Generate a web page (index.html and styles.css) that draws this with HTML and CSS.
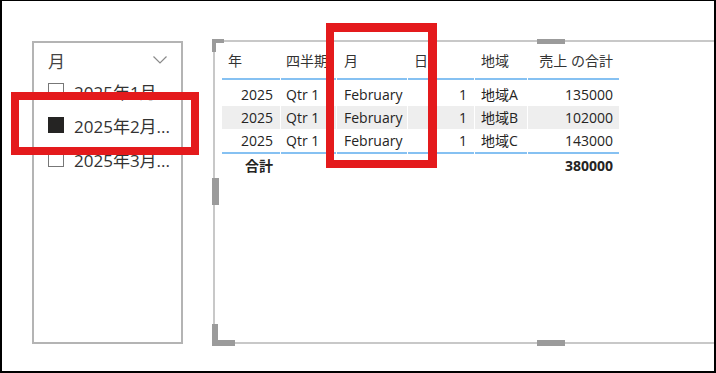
FILE: index.html
```html
<!DOCTYPE html>
<html lang="ja">
<head>
<meta charset="utf-8">
<title>Slicer and table</title>
<link rel="stylesheet" href="styles.css">
</head>
<body>
<div class="screen">
  <section class="slicer">
    <div class="slicer-head">
      <span class="slicer-title">月</span>
      <svg class="chevron" width="14" height="8" viewBox="0 0 14 8"><polyline points="0.5,0.5 7,7 13.5,0.5" fill="none" stroke="#8a8a8a" stroke-width="1.2"/></svg>
    </div>
    <ul class="items">
      <li class="item"><span class="box"></span><span class="label">2025年1月</span></li>
      <li class="item"><span class="box checked"></span><span class="label">2025年2月...</span></li>
      <li class="item"><span class="box"></span><span class="label">2025年3月...</span></li>
    </ul>
  </section>

  <section class="visual">
    <span class="handle h-tl"></span>
    <span class="handle h-tm"></span>
    <span class="handle h-lm"></span>
    <span class="handle h-bl"></span>
    <span class="handle h-bm"></span>
    <div class="tbl">
      <div class="hd">年</div>
      <div class="hd">四半期</div>
      <div class="hd">月</div>
      <div class="hd">日</div>
      <div class="hd">地域</div>
      <div class="hd r">売上 の合計</div>

      <div class="c r first">2025</div>
      <div class="c first">Qtr 1</div>
      <div class="c first">February</div>
      <div class="c r first">1</div>
      <div class="c first">地域A</div>
      <div class="c r first">135000</div>

      <div class="c r alt">2025</div>
      <div class="c alt">Qtr 1</div>
      <div class="c alt">February</div>
      <div class="c r alt">1</div>
      <div class="c alt">地域B</div>
      <div class="c r alt">102000</div>

      <div class="c r">2025</div>
      <div class="c">Qtr 1</div>
      <div class="c">February</div>
      <div class="c r">1</div>
      <div class="c">地域C</div>
      <div class="c r">143000</div>

      <div class="t r">合計</div>
      <div class="t"></div>
      <div class="t"></div>
      <div class="t"></div>
      <div class="t"></div>
      <div class="t r">380000</div>
    </div>
  </section>

  <div class="mark mark-slicer"></div>
  <div class="mark mark-col"></div>
</div>
</body>
</html>
```

FILE: styles.css
```css
html, body {
  margin: 0;
  padding: 0;
  background: #fff;
}

.screen {
  position: relative;
  width: 716px;
  height: 373px;
  box-sizing: border-box;
  border-style: solid;
  border-color: #000;
  border-width: 1px 2px 2px 2px;
  background: #fff;
  display: flex;
  align-items: flex-start;
  padding-left: 30px;
  overflow: hidden;
  font-family: "Open Sans", "Noto Sans CJK JP", sans-serif;
  color: #252423;
}

/* ---------- slicer ---------- */
.slicer {
  flex: none;
  margin-top: 40px;
  width: 151px;
  height: 303px;
  box-sizing: border-box;
  border: 2px solid #b4b4b4;
  background: #fff;
}

.slicer-head {
  display: flex;
  justify-content: space-between;
  align-items: flex-start;
  padding: 8px 14px 0 14px;
  height: 22px;
}

.slicer-title {
  font-size: 17px;
  line-height: 22px;
  color: #444;
}

.chevron {
  margin-top: 5px;
}

.items {
  list-style: none;
  margin: 1px 0 0 0;
  padding: 0 0 0 14px;
}

.item {
  height: 34px;
  display: flex;
  align-items: center;
  gap: 10px;
  font-size: 17px;
  color: #333;
}

.box {
  width: 16px;
  height: 16px;
  box-sizing: border-box;
  border: 1px solid #777;
  background: #fff;
  flex: none;
}

.box.checked {
  background: #252423;
  border-color: #252423;
}

.label {
  white-space: nowrap;
}

/* ---------- table visual ---------- */
.visual {
  position: relative;
  flex: none;
  margin-top: 39px;
  margin-left: 30px;
  width: 540px;
  height: 304px;
  box-sizing: border-box;
  border-top: 2px solid #c8c8c8;
  border-left: 2px solid #c8c8c8;
  border-bottom: 2px solid #c8c8c8;
  padding-left: 7px;
}

.handle {
  position: absolute;
  box-sizing: border-box;
  border: 0 solid #9b9b9b;
}

.h-tl {
  left: -3px;
  top: -3px;
  width: 12px;
  height: 13px;
  border-top-width: 4px;
  border-left-width: 4px;
}

.h-tm {
  left: 322px;
  top: -3px;
  width: 28px;
  height: 5px;
  background: #9b9b9b;
}

.h-lm {
  left: -3px;
  top: 136px;
  width: 7px;
  height: 27px;
  background: #9b9b9b;
}

.h-bl {
  left: -3px;
  bottom: -4px;
  width: 23px;
  height: 22px;
  border-left-width: 6px;
  border-bottom-width: 6px;
}

.h-bm {
  left: 322px;
  bottom: -4px;
  width: 28px;
  height: 6px;
  background: #9b9b9b;
}

.tbl {
  display: grid;
  grid-template-columns: 58px 55px 70px 66px 52px 91px;
  column-gap: 1px;
  font-size: 14px;
  line-height: 19px;
  white-space: nowrap;
}

.tbl > div {
  overflow: hidden;
}

.hd {
  height: 36px;
  display: flex;
  align-items: center;
  padding: 0 6px;
  border-bottom: 2px solid #86c1f2;
  color: #333;
}

.hd:nth-child(2) {
  padding-left: 5px;
}

.hd:nth-child(3) {
  padding-left: 7px;
}

.hd:nth-child(4) {
  padding-left: 6px;
}

.c {
  height: 23px;
  display: flex;
  align-items: center;
  padding: 0 7px 0 6px;
}

.c:nth-child(6n+2) {
  padding-left: 5px;
}

.c:nth-child(6n+3) {
  padding-left: 7px;
}

.c.first {
  margin-top: 3px;
}

.c.alt {
  background: #eeeeee;
}

.r {
  justify-content: flex-end;
}

.t {
  height: 22px;
  display: flex;
  align-items: center;
  padding: 0 7px 0 6px;
  border-top: 2px solid #86c1f2;
  font-weight: 700;
}

.tbl > .c:nth-child(6n),
.tbl > .t:last-child,
.tbl > .hd:nth-child(6) {
  padding-right: 6px;
}

/* ---------- annotation marks ---------- */
.mark {
  position: absolute;
  box-sizing: border-box;
  border: 8px solid #e41a1c;
}

.mark-slicer {
  left: 9px;
  top: 91px;
  width: 188px;
  height: 63px;
}

.mark-col {
  left: 324px;
  top: 22px;
  width: 111px;
  height: 145px;
  border-width: 9px 9px 8px 8px;
}
```
